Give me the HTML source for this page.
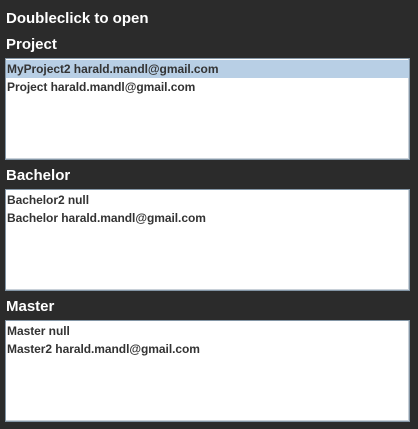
<!DOCTYPE html><html><head><style>
body{margin:0;width:418px;height:429px;background:#2b2b2b;font-family:"Liberation Sans",sans-serif;position:relative;overflow:hidden}
.h{position:absolute;left:6px;color:#fff;font-weight:bold;font-size:15px}
.b{position:absolute;left:5px;width:403px;height:100px;background:#fff;border:1px solid #8496a6;box-shadow:inset -1px -1px 0 #c8d0d8}
.r{height:18px;line-height:18px;padding-left:1px;font-size:12px;font-weight:bold;color:#333;letter-spacing:-0.05px}
.s{background:#b8cfe5}
</style></head><body>
<div class="h" style="top:10px">Doubleclick to open</div>
<div class="h" style="top:36px">Project</div>
<div class="b" style="top:58px"><div style="height:1px"></div><div class="r s">MyProject2 harald.mandl@gmail.com</div><div class="r">Project harald.mandl@gmail.com</div></div>
<div class="h" style="top:167px">Bachelor</div>
<div class="b" style="top:189px"><div style="height:1px"></div><div class="r">Bachelor2 null</div><div class="r">Bachelor harald.mandl@gmail.com</div></div>
<div class="h" style="top:298px">Master</div>
<div class="b" style="top:320px"><div style="height:1px"></div><div class="r">Master null</div><div class="r">Master2 harald.mandl@gmail.com</div></div>
</body></html>
